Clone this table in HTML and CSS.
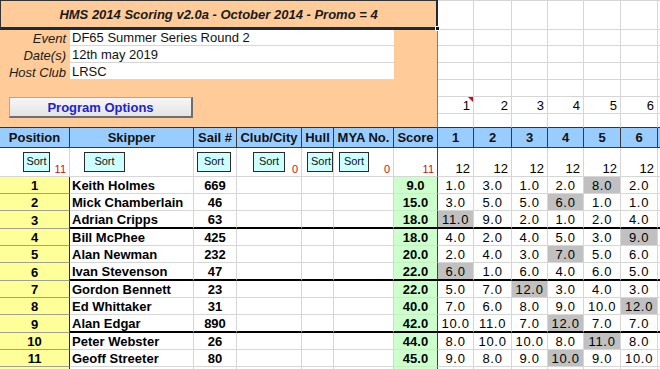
FILE: index.html
```html
<!DOCTYPE html>
<html>
<head>
<meta charset="utf-8">
<link rel="stylesheet" href="styles.css">
</head>
<body>
<table class="sheet">
<colgroup>
<col class="w70"><col class="w124"><col class="w43"><col class="w65"><col class="w32"><col class="w60"><col class="w44">
<col class="w36"><col class="w38"><col class="w36"><col class="w36"><col class="w37"><col class="w37"><col class="w30">
</colgroup>
<tbody>
<tr class="h30">
<td class="title" colspan="7">HMS 2014 Scoring v2.0a - October 2014 - Promo = 4</td>
<td class="g gt"></td><td class="g gt"></td><td class="g gt"></td><td class="g gt"></td><td class="g gt"></td><td class="g gt"></td><td class="g gt"></td>
</tr>
<tr class="h16">
<td class="lbl">Event</td><td class="val" colspan="5">DF65 Summer Series Round 2</td><td class="or edge"></td>
<td class="g"></td><td class="g"></td><td class="g"></td><td class="g"></td><td class="g"></td><td class="g"></td><td class="g"></td>
</tr>
<tr class="h17">
<td class="lbl">Date(s)</td><td class="val" colspan="5">12th may 2019</td><td class="or edge"></td>
<td class="g"></td><td class="g"></td><td class="g"></td><td class="g"></td><td class="g"></td><td class="g"></td><td class="g"></td>
</tr>
<tr class="h17">
<td class="lbl">Host Club</td><td class="val" colspan="5">LRSC</td><td class="or edge"></td>
<td class="g"></td><td class="g"></td><td class="g"></td><td class="g"></td><td class="g"></td><td class="g"></td><td class="g"></td>
</tr>
<tr class="h17">
<td class="or edge" colspan="7"></td>
<td class="g"></td><td class="g"></td><td class="g"></td><td class="g"></td><td class="g"></td><td class="g"></td><td class="g"></td>
</tr>
<tr class="h17">
<td class="or btncell" colspan="2" rowspan="2"><div class="progbtn">Program Options</div></td>
<td class="or edge" colspan="5"></td>
<td class="g num note">1</td><td class="g num">2</td><td class="g num">3</td><td class="g num">4</td><td class="g num">5</td><td class="g num">6</td><td class="g"></td>
</tr>
<tr class="h14">
<td class="or edge hdtop" colspan="5"></td>
<td class="g hdtop"></td><td class="g hdtop"></td><td class="g hdtop"></td><td class="g hdtop"></td><td class="g hdtop"></td><td class="g hdtop"></td><td class="g hdtop"></td>
</tr>
<tr class="h20 head">
<td>Position</td><td>Skipper</td><td>Sail #</td><td>Club/City</td><td>Hull</td><td>MYA No.</td><td>Score</td>
<td>1</td><td>2</td><td>3</td><td>4</td><td>5</td><td>6</td><td></td>
</tr>
<tr class="h29 sortrow">
<td><div class="sortbox"><span class="sortbtn s-pos">Sort</span><span class="cnt">11</span></div></td>
<td><div class="sortbox"><span class="sortbtn s-skip">Sort</span></div></td>
<td><div class="sortbox"><span class="sortbtn s-sail">Sort</span></div></td>
<td><div class="sortbox"><span class="sortbtn s-club">Sort</span><span class="cnt">0</span></div></td>
<td><div class="sortbox"><span class="sortbtn s-hull">Sort</span></div></td>
<td><div class="sortbox"><span class="sortbtn s-mya">Sort</span><span class="cnt">0</span></div></td>
<td class="scol"><div class="sortbox end"><span class="cnt">11</span></div></td>
<td class="num">12</td><td class="num">12</td><td class="num">12</td><td class="num">12</td><td class="num">12</td><td class="num">12</td><td></td>
</tr>
<tr class="h17 row"><td class="pos">1</td><td class="name">Keith Holmes</td><td class="sail">669</td><td></td><td></td><td></td><td class="score">9.0</td><td>1.0</td><td>3.0</td><td>1.0</td><td>2.0</td><td class="d">8.0</td><td>2.0</td><td></td></tr>
<tr class="h17 row"><td class="pos">2</td><td class="name">Mick Chamberlain</td><td class="sail">46</td><td></td><td></td><td></td><td class="score">15.0</td><td>3.0</td><td>5.0</td><td>5.0</td><td class="d">6.0</td><td>1.0</td><td>1.0</td><td></td></tr>
<tr class="h18 row grp"><td class="pos">3</td><td class="name">Adrian Cripps</td><td class="sail">63</td><td></td><td></td><td></td><td class="score">18.0</td><td class="d">11.0</td><td>9.0</td><td>2.0</td><td>1.0</td><td>2.0</td><td>4.0</td><td></td></tr>
<tr class="h17 row"><td class="pos">4</td><td class="name">Bill McPhee</td><td class="sail">425</td><td></td><td></td><td></td><td class="score">18.0</td><td>4.0</td><td>2.0</td><td>4.0</td><td>5.0</td><td>3.0</td><td class="d">9.0</td><td></td></tr>
<tr class="h17 row"><td class="pos">5</td><td class="name">Alan Newman</td><td class="sail">232</td><td></td><td></td><td></td><td class="score">20.0</td><td>2.0</td><td>4.0</td><td>3.0</td><td class="d">7.0</td><td>5.0</td><td>6.0</td><td></td></tr>
<tr class="h18 row grp"><td class="pos">6</td><td class="name">Ivan Stevenson</td><td class="sail">47</td><td></td><td></td><td></td><td class="score">22.0</td><td class="d">6.0</td><td>1.0</td><td>6.0</td><td>4.0</td><td>6.0</td><td>5.0</td><td></td></tr>
<tr class="h17 row"><td class="pos">7</td><td class="name">Gordon Bennett</td><td class="sail">23</td><td></td><td></td><td></td><td class="score">22.0</td><td>5.0</td><td>7.0</td><td class="d">12.0</td><td>3.0</td><td>4.0</td><td>3.0</td><td></td></tr>
<tr class="h17 row"><td class="pos">8</td><td class="name">Ed Whittaker</td><td class="sail">31</td><td></td><td></td><td></td><td class="score">40.0</td><td>7.0</td><td>6.0</td><td>8.0</td><td>9.0</td><td>10.0</td><td class="d">12.0</td><td></td></tr>
<tr class="h18 row grp"><td class="pos">9</td><td class="name">Alan Edgar</td><td class="sail">890</td><td></td><td></td><td></td><td class="score">42.0</td><td>10.0</td><td>11.0</td><td>7.0</td><td class="d">12.0</td><td>7.0</td><td>7.0</td><td></td></tr>
<tr class="h17 row"><td class="pos">10</td><td class="name">Peter Webster</td><td class="sail">26</td><td></td><td></td><td></td><td class="score">44.0</td><td>8.0</td><td>10.0</td><td>10.0</td><td>8.0</td><td class="d">11.0</td><td>8.0</td><td></td></tr>
<tr class="h17 row"><td class="pos">11</td><td class="name">Geoff Streeter</td><td class="sail">80</td><td></td><td></td><td></td><td class="score">45.0</td><td>9.0</td><td>8.0</td><td>9.0</td><td class="d">10.0</td><td>9.0</td><td>10.0</td><td></td></tr>
<tr class="h17 row"><td class="pos"></td><td class="name"></td><td class="sail"></td><td></td><td></td><td></td><td class="score"></td><td></td><td></td><td></td><td></td><td></td><td></td><td></td></tr>
</tbody>
</table>
</body>
</html>
```

FILE: styles.css
```css
html, body {
  margin: 0;
  padding: 0;
  background: #ffffff;
  overflow: hidden;
}
body {
  font-family: "Liberation Sans", Arial, sans-serif;
  color: #000;
}
.sheet {
  border-collapse: separate;
  border-spacing: 0;
  table-layout: fixed;
  width: 688px;
}
.w70 { width: 70px; }
.w124 { width: 124px; }
.w43 { width: 43px; }
.w65 { width: 65px; }
.w32 { width: 32px; }
.w60 { width: 60px; }
.w44 { width: 44px; }
.w36 { width: 36px; }
.w38 { width: 38px; }
.w37 { width: 37px; }
.w30 { width: 30px; }

.h30 { height: 30px; }
.h16 { height: 16px; }
.h17 { height: 17px; }
.h18 { height: 18px; }
.h14 { height: 14px; }
.h20 { height: 20px; }
.h29 { height: 29px; }

td {
  padding: 0;
  border: 0;
  font-size: 13px;
  line-height: 15px;
  white-space: nowrap;
  overflow: hidden;
  vertical-align: bottom;
  box-sizing: border-box;
}

/* generic grid cell */
.g {
  border-right: 1px solid #d6d6d6;
  border-bottom: 1px solid #d6d6d6;
}
.gt { border-top: 1px solid #d6d6d6; }
.num {
  text-align: right;
  padding-right: 3px;
}
.note { position: relative; }
.note::after {
  content: "";
  position: absolute;
  top: 0;
  right: 0;
  border-top: 5px solid #e0001a;
  border-left: 5px solid transparent;
}

/* top block */
.title {
  position: relative;
  overflow: visible;
  background: #ffcc99;
  border-top: 1px solid #333;
  border-left: 1px solid #333;
  border-right: 2px solid #1c2a3a;
  border-bottom: 3px solid #1c2a3a;
  text-align: center;
  vertical-align: middle;
  font-weight: bold;
  font-style: italic;
  color: #1a1a1a;
}
.title::after {
  content: "";
  position: absolute;
  right: -4px;
  bottom: -4px;
  width: 5px;
  height: 5px;
  background: #111;
  border: 1px solid #fff;
  box-sizing: border-box;
}
.or { background: #ffcc99; }
.edge { border-right: 1px solid #7f7f7f; }
.lbl {
  background: #ffcc99;
  text-align: right;
  padding-right: 4px;
  font-style: italic;
  color: #1a1a1a;
}
.val {
  background: #ffffff;
  border-bottom: 1px solid #d6d6d6;
  padding-left: 2px;
  color: #111;
}
.btncell {
  vertical-align: top;
  border-bottom: 1px solid #333;
}
.progbtn {
  box-sizing: border-box;
  margin-left: 9px;
  width: 184px;
  height: 21px;
  padding-top: 1px;
  line-height: 17px;
  text-align: center;
  font-weight: bold;
  color: #2222cc;
  background: linear-gradient(#f6f6f6, #e4e4e4);
  border-top: 1px solid #a8a8a8;
  border-left: 1px solid #a8a8a8;
  border-right: 2px solid #6e6e6e;
  border-bottom: 2px solid #6e6e6e;
}
.hdtop { border-bottom: 1px solid #333; }

/* header */
.head td {
  background: #99ccff;
  border-right: 1px solid #3a3a3a;
  border-bottom: 1px solid #3a3a3a;
  text-align: center;
  font-weight: bold;
  vertical-align: middle;
  color: #111;
}

/* sort row */
.sortrow td {
  border-right: 1px solid #d6d6d6;
  border-bottom: 1px solid #d6d6d6;
  vertical-align: top;
}
.sortrow td.num { vertical-align: bottom; }
.sortrow td.scol { border-right: 1px solid #404040; }
.sortbox {
  display: flex;
  height: 28px;
  justify-content: space-between;
}
.sortbox.end { justify-content: flex-end; }
.sortbtn {
  flex-shrink: 0;
  align-self: flex-start;
  box-sizing: border-box;
  height: 20px;
  margin-top: 4px;
  padding-top: 2px;
  font-size: 11px;
  line-height: 13px;
  text-align: center;
  overflow: hidden;
  white-space: nowrap;
  background: #ccffff;
  border: 1px solid #2a2a2a;
  color: #111;
}
.s-pos { width: 27px; margin-left: 23px; }
.s-skip { width: 41px; margin-left: 14px; }
.s-sail { width: 34px; margin-left: 3px; }
.s-club { width: 32px; margin-left: 16px; }
.s-hull { width: 26px; margin-left: 5px; text-align: left; padding-left: 3px; }
.s-mya { width: 30px; margin-left: 5px; }
.cnt {
  align-self: flex-end;
  padding-right: 3px;
  font-size: 11px;
  line-height: 13px;
  color: #cc1010;
}

/* data rows */
.row td {
  border-right: 1px solid #d6d6d6;
  border-bottom: 1px solid #d6d6d6;
  text-align: center;
  letter-spacing: 0.7px;
}
.row td.pos {
  background: #ffff99;
  font-weight: bold;
  letter-spacing: 0;
  border-right: 1px solid #303030;
  border-bottom: 1px solid #a0a090;
}
.row td.name {
  text-align: left;
  padding-left: 2px;
  font-weight: bold;
  letter-spacing: 0;
}
.row td.sail {
  font-weight: bold;
  letter-spacing: 0;
}
.row td.score {
  background: #ccffcc;
  font-weight: bold;
  letter-spacing: 0;
  border-right: 1px solid #404040;
  border-bottom: 1px solid #c4f0c4;
}
.row td.d { background: #c0c0c0; }
.grp td { border-bottom: 2px solid #000 !important; }
.grp td.pos { border-bottom: 1px solid #a0a090 !important; }
```
